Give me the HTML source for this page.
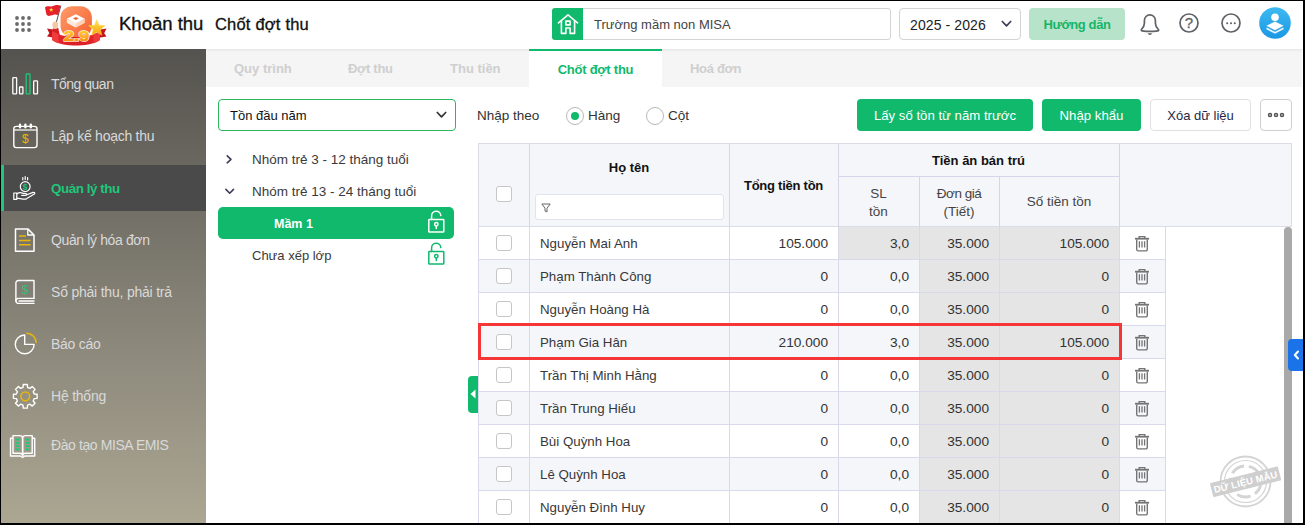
<!DOCTYPE html>
<html lang="vi">
<head>
<meta charset="utf-8">
<title>Chốt đợt thu</title>
<style>
*{box-sizing:border-box;margin:0;padding:0}
html,body{width:1305px;height:525px;overflow:hidden;background:#fff}
body{font-family:"Liberation Sans",sans-serif;font-size:13px;color:#1f1f1f;position:relative}
.abs{position:absolute}
#frame{position:absolute;left:0;top:0;width:1305px;height:525px;border:1px solid #000;border-right-width:2px;border-bottom-width:2px;z-index:100;pointer-events:none}
/* header */
#hdr{position:absolute;left:0;top:0;width:1305px;height:49px;background:#fff}
.t1{position:absolute;left:119px;top:12px;font-size:18.5px;line-height:24px;color:#111;white-space:nowrap;-webkit-text-stroke:.35px #111}
.t2{position:absolute;left:215px;top:12px;font-size:16.5px;letter-spacing:.2px;line-height:24px;color:#111;white-space:nowrap;-webkit-text-stroke:.3px #111}
.school{position:absolute;left:552px;top:8px;width:339px;height:32px;border:1px solid #d4d4d4;border-radius:3px;background:#fff}
.school .ic{position:absolute;left:-1px;top:-1px;width:31px;height:32px;background:#10b96c;border-radius:3px 0 0 3px}
.school span{position:absolute;left:41px;top:1px;line-height:30px;font-size:13px;color:#444;white-space:nowrap}
.year{position:absolute;left:899px;top:8px;width:122px;height:32px;border:1px solid #d4d4d4;border-radius:4px;background:#fff}
.year span{position:absolute;left:10px;top:1px;line-height:30px;font-size:14px;letter-spacing:.1px;color:#222;white-space:nowrap}
.guide{position:absolute;left:1029px;top:8px;width:96px;height:32px;border-radius:4px;background:#b6e3ca;color:#16b568;font-weight:bold;font-size:13px;letter-spacing:-.4px;line-height:33px;text-align:center}
/* sidebar */
#side{position:absolute;left:0;top:49px;width:206px;height:476px;background:linear-gradient(180deg,#55534f 0%,#6d6a62 28%,#8a867a 60%,#aca792 100%)}
.mi{position:absolute;left:0;width:206px;height:46px}
.mi span{position:absolute;left:51px;top:0;line-height:47px;font-size:14px;color:#d9d9d9;white-space:nowrap}
.mi.act{background:#4a4a4a}
.mi.act:before{content:"";position:absolute;left:1px;top:0;width:3px;height:46px;background:#1fc77a}
.mi.act span{color:#1fc77a;font-weight:bold;font-size:13.400px}
.mi svg{position:absolute}
/* tabs */
#tabs{position:absolute;left:206px;top:49px;width:1096px;height:38px;background:#f5f5f5;box-shadow:inset 0 3px 3px -2px rgba(0,0,0,.08)}
.tab{position:absolute;top:0;height:38px;line-height:40px;font-size:13px;font-weight:bold;color:#cfcfcf;white-space:nowrap}
.tab.on{background:#fff;border-top:2px solid #10b96c;color:#10b96c;line-height:38px;text-align:center;letter-spacing:-.25px}
/* left tree */
.dd{position:absolute;left:218px;top:99px;width:238px;height:32px;border:1px solid #2fb55f;border-radius:4px;background:#fff}
.dd span{position:absolute;left:11px;top:1px;line-height:30px;font-size:13px;color:#111}
.tr{position:absolute;left:252px;font-size:13.5px;color:#3a3a3a;line-height:20px;white-space:nowrap}
.sel{position:absolute;left:218px;top:207px;width:236px;height:32px;border-radius:5px;background:#10b96c}
.sel span{position:absolute;left:56px;top:1px;line-height:32px;font-size:12.5px;color:#fff;font-weight:bold}
/* toolbar */
.lbl{position:absolute;font-size:13.5px;line-height:20px;color:#333;white-space:nowrap}
.radio{position:absolute;width:18px;height:18px;border:1px solid #b9b9b9;border-radius:50%;background:#fff}
.radio.on:after{content:"";position:absolute;left:4px;top:4px;width:8px;height:8px;border-radius:50%;background:#10b96c}
.btn{position:absolute;top:99px;height:32px;border-radius:4px;font-size:13.2px;line-height:32px;text-align:center;white-space:nowrap}
.btn.g{background:#10b96c;color:#fff;line-height:34px}
.btn.w{background:#fff;border:1px solid #e0e0e0;color:#23284a;line-height:32px;font-size:13px}
/* table */
#thead{position:absolute;left:478px;top:143px;width:814px;height:84px;background:#f5f6fa;border:1px solid #dcdce8}
.vl{position:absolute;width:1px;background:#d5d5ea}
.hl{position:absolute;height:1px;background:#d5d5ea}
.th{position:absolute;font-weight:bold;font-size:13px;color:#111;text-align:center;white-space:nowrap;line-height:18px}
.th2{position:absolute;font-size:13.5px;color:#444;text-align:center;white-space:nowrap;line-height:18px}
.cb{position:absolute;width:16px;height:16px;border:1px solid #c6c6c6;border-radius:3px;background:#fff}
.filter{position:absolute;left:535px;top:194px;width:189px;height:26px;border:1px solid #e3e3ee;border-radius:3px;background:#fff}
.row{position:absolute;left:478px;width:688px;height:33px;background:#fff}
.row.alt{background:#f5f6fa}
.row .c{position:absolute;top:0;height:33px;line-height:34px;font-size:13.5px;color:#333;white-space:nowrap;border-right:1px solid #d9d9ee;border-bottom:1px solid #d9d9ee}
.row .c.r{text-align:right;padding-right:10px;font-size:13.700px}
.row .c.gy{background:#e5e5e5}
.row .cb{left:17px;top:8px}
.c0{left:0;width:52px;border-left:1px solid #d9d9ee}
.c1{left:52px;width:200px;padding-left:10px;font-size:13.300px !important;color:#383838 !important}
.c2{left:252px;width:109px}
.c3{left:361px;width:81px}
.c4{left:442px;width:80px}
.c5{left:522px;width:120px}
.c6{left:642px;width:46px}
.c6 svg{position:absolute;left:14px;top:8px}
.hi{position:absolute;left:478px;top:323px;width:644px;height:37px;border:3px solid #f63636}
.sb{position:absolute;left:1284px;top:227px;width:8px;height:298px;background:#a9a9a9;border-radius:4px 4px 0 0}
.bh{position:absolute;left:1288px;top:339px;width:17px;height:32px;background:#1a73e8;border-radius:4px 0 0 4px}
.gh{position:absolute;left:468px;top:376px;width:10px;height:37px;background:#10b96c;border-radius:4px 0 0 4px}
</style>
</head>
<body>
<div id="hdr">
  <svg class="abs" style="left:14px;top:15px" width="18" height="18" viewBox="0 0 18 18" fill="#6b6b6b"><circle cx="3" cy="3" r="1.9"/><circle cx="9" cy="3" r="1.9"/><circle cx="15" cy="3" r="1.9"/><circle cx="3" cy="9" r="1.9"/><circle cx="9" cy="9" r="1.9"/><circle cx="15" cy="9" r="1.9"/><circle cx="3" cy="15" r="1.9"/><circle cx="9" cy="15" r="1.9"/><circle cx="15" cy="15" r="1.9"/></svg>
  <svg class="abs" style="left:44px;top:4px" width="64" height="42" viewBox="0 0 64 42">
<defs>
<linearGradient id="lg1" x1="0" y1="0" x2="1" y2="1"><stop offset="0" stop-color="#ff9c6b"/><stop offset="1" stop-color="#f4602f"/></linearGradient>
<linearGradient id="lg2" x1="0" y1="0" x2="0" y2="1"><stop offset="0" stop-color="#ffdc3c"/><stop offset="1" stop-color="#ff7a00"/></linearGradient>
<linearGradient id="lg3" x1="0" y1="0" x2="0" y2="1"><stop offset="0" stop-color="#ffe45a"/><stop offset="1" stop-color="#f5a300"/></linearGradient>
<linearGradient id="lg4" x1="0" y1="0" x2="1" y2="0"><stop offset="0" stop-color="#e8262c"/><stop offset=".5" stop-color="#d81e25"/><stop offset="1" stop-color="#e8262c"/></linearGradient>
</defs>
<path d="M3 24.500l9 1.500v8l-9-1.500 2.300-3.200z" fill="#c4161c"/>
<path d="M62.500 24.500l-9 1.500v8l9-1.500-2.300-3.200z" fill="#c4161c"/>
<rect x="16.500" y="2.200" width="31.400" height="31.400" rx="11.500" fill="url(#lg1)"/>
<path d="M31.800 14.500l9 4.300-9 4.700-9-4.700z" fill="#ffd9c4"/>
<path d="M31.800 10.300l9 4.500-9 4.700-9-4.700z" fill="#fff"/>
<path d="M22.800 14.800v4l9 4.700v-4z" fill="#ffe9dd"/><path d="M40.800 14.800v4l-9 4.700v-4z" fill="#ffd2ba"/>
<path d="M29 14.500l2.800-1.400 2.800 1.400-2.800 1.500z" fill="#f4602f"/>
<path d="M16.800 1.800 10.800 24" stroke="#5b4a44" stroke-width="1" fill="none"/>
<path d="M1 3.400c2.400-2.200 4.600-.400 7.200-1.200s4.600-2 8.400-.600l-2.500 9.400c-3-1.300-5-.200-7.200.500s-3.400.400-4.400-.700z" fill="#e3222b"/>
<polygon points="7.20,3.40 7.79,4.99 9.48,5.06 8.15,6.11 8.61,7.74 7.20,6.80 5.79,7.74 6.25,6.11 4.92,5.06 6.61,4.99" fill="#ffd83a"/>
<path d="M8.800 24.500l5.500-.500 1.800 9-7 .500z" fill="#d91f26"/>
<ellipse cx="11.300" cy="21.200" rx="2.900" ry="3.700" fill="#f7c7a3"/>
<path d="M8 27c7 4.500 16 6 24 6s17-1.500 24-6v9c-7 4.500-16 5.500-24 5.500S15 40.500 8 36z" fill="url(#lg4)"/>
<path d="M8 27c2 1.300 4.200 2.300 6.500 3.100v9.300C12.200 38.600 10 37.500 8 36z" fill="#ef3b3b"/>
<path d="M56 27c-2 1.300-4.200 2.300-6.500 3.100v9.300c2.300-.800 4.500-1.900 6.500-3.400z" fill="#ef3b3b"/>
<polygon points="52.80,15.70 55.03,21.23 60.98,21.64 56.41,25.47 57.85,31.26 52.80,28.10 47.75,31.26 49.19,25.47 44.62,21.64 50.57,21.23" fill="url(#lg3)" stroke="#ffd24a" stroke-width=".5"/>
<text x="19.800" y="37.300" textLength="25.400" lengthAdjust="spacingAndGlyphs" font-family="Liberation Sans, sans-serif" font-weight="bold" font-size="14" fill="url(#lg2)" stroke="#fff" stroke-width="1.600" paint-order="stroke" stroke-linejoin="round">2.9</text><text x="19.800" y="37.300" textLength="25.400" lengthAdjust="spacingAndGlyphs" font-family="Liberation Sans, sans-serif" font-weight="bold" font-size="14" fill="url(#lg2)" stroke="url(#lg2)" stroke-width=".600">2.9</text>
</svg>
  <div class="t1">Khoản thu</div>
  <div class="t2">Chốt đợt thu</div>
  <div class="school"><div class="ic"><svg class="abs" style="left:0;top:0" width="32" height="31" viewBox="0 -.300 32 31" fill="none" stroke="#fff" stroke-width="1.6" stroke-linejoin="round" stroke-linecap="round"><path d="M6.5 14.6 16 6.6l9.5 8"/><path d="M9.400 12.600v12.500h4.500v-5.400h4.200v5.400h4.500V12.600"/><rect x="13.9" y="12.8" width="4.2" height="3.8" /></svg></div><span>Trường mầm non MISA</span></div>
  <div class="year"><span>2025 - 2026</span><svg class="abs" style="left:101px;top:11px" width="11" height="8" viewBox="0 0 11 8" fill="none" stroke="#3b3d5c" stroke-width="1.7" stroke-linecap="round" stroke-linejoin="round"><path d="M1.3 1.5 5.5 5.8 9.7 1.5"/></svg></div>
  <div class="guide">Hướng dẫn</div>
  <svg class="abs" style="left:1138px;top:12px" width="24" height="24" viewBox="0 0 24 24" fill="none" stroke="#5f6266" stroke-width="1.700" stroke-linejoin="round" stroke-linecap="round"><path d="M3.400 17.500C4.800 16 6.400 14.200 6.400 11.200V8.400a5.500 5.500 0 0 1 11 0v2.800c0 3 1.600 4.800 3 6.300.500.600.200 1.300-.600 1.400-4.800.700-10.800.700-15.600 0-.800-.100-1.100-.800-.800-1.400z"/><path d="M9.700 21.300h4.400c-.400 1.100-1.200 1.600-2.200 1.600s-1.800-.500-2.200-1.600z" fill="#5f6266" stroke="none"/></svg>
<svg class="abs" style="left:1178px;top:12px" width="22" height="22" viewBox="0 0 22 22" fill="none" stroke="#5f6266" stroke-width="1.700"><circle cx="11" cy="11" r="9"/><text x="11" y="16.400" text-anchor="middle" font-family="Liberation Sans, sans-serif" font-size="15" fill="#5f6266" stroke="#5f6266" stroke-width=".300">?</text></svg>
<svg class="abs" style="left:1220px;top:12px" width="22" height="22" viewBox="0 0 22 22" fill="none" stroke="#5f6266" stroke-width="1.700"><circle cx="11" cy="11" r="9"/><g fill="#5f6266" stroke="none"><circle cx="7.200" cy="11.300" r="1.050"/><circle cx="11" cy="11.300" r="1.050"/><circle cx="14.800" cy="11.300" r="1.050"/></g></svg>
<svg class="abs" style="left:1259px;top:7px" width="32" height="32" viewBox="0 0 32 32"><defs><linearGradient id="av" x1="0" y1="0" x2="0" y2="1"><stop offset="0" stop-color="#3db9f1"/><stop offset="1" stop-color="#1b98e3"/></linearGradient></defs><circle cx="16" cy="16" r="15.800" fill="url(#av)"/><circle cx="16" cy="10.200" r="3.800" fill="#fff"/><path d="M16 14.500l8.500 4.300L16 23.300l-8.500-4.500z" fill="#fff"/><path d="M7.500 21.300 16 25.800l8.500-4.500" fill="none" stroke="#e6f4fc" stroke-width="1.800" stroke-linejoin="round"/></svg>
</div>
<div id="side">
  <div class="mi" style="top:12px"><svg style="left:11px;top:11px" width="29" height="24" viewBox="0 0 29 24" fill="none" stroke="#fff" stroke-width="1.3"><rect x="1.8" y="5.6" width="3.8" height="16.2" rx=".6"/><rect x="8.5" y="15" width="3.4" height="6.8" rx=".6"/><rect x="15.2" y="2" width="3.8" height="19.8" rx=".6" stroke="#1fc77a"/><rect x="22.7" y="8.8" width="3.8" height="13" rx=".6"/></svg><span style="letter-spacing:-.5px">Tổng quan</span></div>
  <div class="mi" style="top:64px"><svg style="left:12px;top:10px" width="27" height="27" viewBox="0 0 27 27" fill="none" stroke="#fff" stroke-width="1.4"><rect x="1.8" y="3.4" width="23.2" height="21.2" rx="2.6"/><path d="M2 7h23" stroke-width="1.2"/><path d="M8 1.6v2.6M13.4 1.6v2.6M18.8 1.6v2.6" stroke-width="2.4" stroke-linecap="round"/><text x="13.4" y="20.3" text-anchor="middle" font-family="Liberation Sans, sans-serif" font-size="12" fill="#e9b60a" stroke="none">$</text></svg><span style="letter-spacing:-.26px">Lập kế hoạch thu</span></div>
  <div class="mi act" style="top:116px"><svg style="left:12px;top:10px" width="26" height="26" viewBox="0 0 26 26" fill="none" stroke="#fff" stroke-width="1.2" stroke-linecap="round" stroke-linejoin="round"><path d="M10.8 2.6v2.2M13.2 1.6v3M15.6 2.6v2.2"/><circle cx="13.2" cy="11.6" r="4.9"/><text x="13.2" y="14.6" text-anchor="middle" font-family="Liberation Sans, sans-serif" font-weight="bold" font-size="8.5" fill="#1fc77a" stroke="none">$</text><rect x="1.8" y="18" width="3" height="6.4"/><path d="M4.8 18.8c2-1.3 4.2-1.5 6-.5l2.6.1c1.4 0 1.6 1.8.2 2h-3.800M13.600 20.300l7.400-2.900c1.400-.5 2.400.8 1.300 1.700l-7.500 4.500c-1.200.6-2.300.7-3.600.5l-6.400-1"/></svg><span style="letter-spacing:-.45px">Quản lý thu</span></div>
  <div class="mi" style="top:168px"><svg style="left:13px;top:10px" width="24" height="27" viewBox="0 0 24 27" fill="none" stroke="#fff" stroke-width="1.5" stroke-linejoin="round"><path d="M2.5 1.9h12.3l6.200 6.100v16.300h-18.500z"/><path d="M14.800 1.900v6.100h6.200" stroke-width="1.300"/><path d="M6 9h7M6 13.400h11.500M6 17.800h11.500" stroke="#e9b60a" stroke-width="1.500"/></svg><span style="letter-spacing:-.37px">Quản lý hóa đơn</span></div>
  <div class="mi" style="top:220px"><svg style="left:14px;top:10px" width="22" height="26" viewBox="0 0 22 26" fill="none" stroke="#fff" stroke-width="1.4" stroke-linejoin="round" stroke-linecap="round"><path d="M20 19.400V1.500H4.300a2.400 2.400 0 0 0-2.400 2.400v18.400"/><path d="M20 19.400H4.500a2.500 2.500 0 0 0 0 5H20M5 22h15" /><text x="11" y="14.800" text-anchor="middle" font-family="Liberation Sans, sans-serif" font-size="12" fill="#1fc77a" stroke="none">$</text></svg><span style="letter-spacing:-.21px">Sổ phải thu, phải trả</span></div>
  <div class="mi" style="top:272px"><svg style="left:13px;top:11px" width="25" height="24" viewBox="0 0 25 24" fill="none" stroke="#fff" stroke-width="1.4" stroke-linejoin="round"><path d="M11.700 12.400V3a9.400 9.400 0 1 0 9.400 9.400z"/><path d="M13.800 1.200a9.400 9.400 0 0 1 9.300 9.200" stroke="#e9b60a" stroke-width="1.500" stroke-linecap="round"/></svg><span style="letter-spacing:-.27px">Báo cáo</span></div>
  <div class="mi" style="top:324px"><svg style="left:12px;top:10px" width="27" height="27" viewBox="0 0 27 27" fill="none" stroke="#fff" stroke-width="1.4" stroke-linejoin="round"><path d="M11.02 4.39 L11.27 1.47 L15.33 1.47 L15.58 4.39 L17.99 5.39 L20.23 3.50 L23.10 6.37 L21.21 8.61 L22.21 11.02 L25.13 11.27 L25.13 15.33 L22.21 15.58 L21.21 17.99 L23.10 20.23 L20.23 23.10 L17.99 21.21 L15.58 22.21 L15.33 25.13 L11.27 25.13 L11.02 22.21 L8.61 21.21 L6.37 23.10 L3.50 20.23 L5.39 17.99 L4.39 15.58 L1.47 15.33 L1.47 11.27 L4.39 11.02 L5.39 8.61 L3.50 6.37 L6.37 3.50 L8.61 5.39Z"/><circle cx="13.3" cy="13.3" r="4.4" stroke="#e9b60a" stroke-width="1.5"/></svg><span style="letter-spacing:-.22px">Hệ thống</span></div>
  <div class="mi" style="top:373px"><svg style="left:9px;top:12px" width="28" height="25" viewBox="0 0 28 25" fill="none" stroke="#fff" stroke-width="1.400" stroke-linejoin="round"><path d="M4 4.200H1.500v17.800h9.500c1 0 1.700.500 2.600 1.400.900-.900 1.600-1.400 2.600-1.400h9.500V4.200h-2.500"/><path d="M4 1.600h6.800c1.500 0 2.800 1 2.800 2.400V21.500c0-1.300-1.300-2.300-2.800-2.300H4z"/><path d="M23.200 1.600h-6.800c-1.500 0-2.800 1-2.800 2.400V21.500c0-1.300 1.300-2.300 2.800-2.300h6.800z"/><path d="M6.500 5.500h4M6.500 8.800h4M6.500 12.100h4M6.500 15.400h4M16.700 5.500h4M16.700 8.800h4M16.700 12.100h4M16.700 15.400h4" stroke="#1fc77a" stroke-width="1.800"/></svg><span style="letter-spacing:-.41px">Đào tạo MISA EMIS</span></div>
</div>
<div id="tabs">
  <div class="tab" style="left:28px">Quy trình</div>
  <div class="tab" style="left:142px;letter-spacing:-.3px">Đợt thu</div>
  <div class="tab" style="left:244px">Thu tiền</div>
  <div class="tab on" style="left:323px;width:133px">Chốt đợt thu</div>
  <div class="tab" style="left:484px;letter-spacing:-.3px">Hoá đơn</div>
</div>
<div class="dd"><span>Tồn đầu năm</span><svg class="abs" style="left:217px;top:11px" width="11" height="8" viewBox="0 0 11 8" fill="none" stroke="#333" stroke-width="1.7" stroke-linecap="round" stroke-linejoin="round"><path d="M1.3 1.5 5.5 5.8 9.7 1.5"/></svg></div>
<svg class="abs" style="left:225px;top:154px" width="8" height="11" viewBox="0 0 8 11" fill="none" stroke="#3b3d5c" stroke-width="1.600" stroke-linecap="round" stroke-linejoin="round"><path d="M2.200 1.800 6 5.300 2.200 8.800"/></svg>
<div class="tr" style="top:150px">Nhóm trẻ 3 - 12 tháng tuổi</div>
<svg class="abs" style="left:223.500px;top:187px" width="11" height="8" viewBox="0 0 11 8" fill="none" stroke="#3b3d5c" stroke-width="1.600" stroke-linecap="round" stroke-linejoin="round"><path d="M1.900 2.400 5.700 6.200 9.500 2.400"/></svg>
<div class="tr" style="top:182px">Nhóm trẻ 13 - 24 tháng tuổi</div>
<div class="sel"><span>Mầm 1</span></div>
<svg class="abs" style="left:427px;top:210px" width="19" height="24" viewBox="0 0 19 24" fill="none" stroke="#fff" stroke-width="1.5" stroke-linecap="round" stroke-linejoin="round"><rect x="1.8" y="9.5" width="15" height="12.5" rx=".6"/><path d="M4.6 9.5V6.2a4.6 4.6 0 0 1 9.2-.6"/><circle cx="9.3" cy="14.3" r="1.7"/><path d="M9.3 16v2.6"/></svg>
<div class="tr" style="top:246px;font-size:13px">Chưa xếp lớp</div>
<svg class="abs" style="left:427px;top:242px" width="19" height="24" viewBox="0 0 19 24" fill="none" stroke="#10b96c" stroke-width="1.5" stroke-linecap="round" stroke-linejoin="round"><rect x="1.8" y="9.5" width="15" height="12.5" rx=".6"/><path d="M4.6 9.5V6.2a4.6 4.6 0 0 1 9.2-.6"/><circle cx="9.3" cy="14.3" r="1.7"/><path d="M9.3 16v2.6"/></svg>

<div class="lbl" style="left:477px;top:106px">Nhập theo</div>
<div class="radio on" style="left:566px;top:107px"></div>
<div class="lbl" style="left:588px;top:106px">Hàng</div>
<div class="radio" style="left:646px;top:107px"></div>
<div class="lbl" style="left:668px;top:106px">Cột</div>
<div class="btn g" style="left:857px;width:176px">Lấy số tồn từ năm trước</div>
<div class="btn g" style="left:1042px;width:99px">Nhập khẩu</div>
<div class="btn w" style="left:1150px;width:101px">Xóa dữ liệu</div>
<div class="btn w" style="left:1260px;width:32px;border-color:#cfcfcf"><svg class="abs" style="left:6px;top:12px" width="18" height="6" viewBox="0 0 18 6" fill="none" stroke="#555" stroke-width="1.500"><circle cx="3" cy="3" r="1.500"/><circle cx="9" cy="3" r="1.5"/><circle cx="15" cy="3" r="1.5"/></svg></div>

<div id="thead"></div>
<div class="vl" style="left:529px;top:144px;height:83px"></div>
<div class="vl" style="left:729px;top:144px;height:83px"></div>
<div class="vl" style="left:838px;top:144px;height:83px"></div>
<div class="vl" style="left:919px;top:176px;height:51px"></div>
<div class="vl" style="left:999px;top:176px;height:51px"></div>
<div class="vl" style="left:1119px;top:144px;height:83px"></div>
<div class="hl" style="left:838px;top:176px;width:281px"></div>
<div class="cb" style="left:496px;top:186px"></div>
<div class="th" style="left:529px;width:200px;top:159px">Họ tên</div>
<div class="filter"><svg class="abs" style="left:5px;top:8px" width="10" height="10" viewBox="0 0 10 10" fill="none" stroke="#666" stroke-width="1" stroke-linejoin="round"><path d="M.8 1h8.4L6 5.2V9L4 8V5.2z"/></svg></div>
<div class="th" style="left:729px;width:109px;top:177px;letter-spacing:-.25px">Tổng tiền tồn</div>
<div class="th" style="left:838px;width:281px;top:152px">Tiền ăn bán trú</div>
<div class="th2" style="left:838px;width:81px;top:185px">SL<br>tồn</div>
<div class="th2" style="left:919px;width:80px;top:185px"><span style="letter-spacing:-.5px">Đơn giá</span><br>(Tiết)</div>
<div class="th2" style="left:999px;width:120px;top:193px">Số tiền tồn</div>
<div class="row" style="top:227px"><div class="c c0"><div class="cb"></div></div><div class="c c1">Nguyễn Mai Anh</div><div class="c c2 r">105.000</div><div class="c c3 r gy">3,0</div><div class="c c4 r gy">35.000</div><div class="c c5 r gy">105.000</div><div class="c c6"><svg width="16" height="17" viewBox="0 0 16 17" fill="none" stroke="#747474" stroke-width="1.4"><path d="M1 3.7h14" stroke-width="1.8"/><path d="M5.2 3V1.6h5.6V3" /><path d="M2.7 4.5v9.8a1.6 1.6 0 0 0 1.6 1.6h7.4a1.6 1.6 0 0 0 1.6-1.6V4.5"/><path d="M5.400 6.200v6.200M8 6.200v6.200M10.600 6.200v6.200" stroke-width="1.3"/></svg></div></div>
<div class="row alt" style="top:260px"><div class="c c0"><div class="cb"></div></div><div class="c c1">Phạm Thành Công</div><div class="c c2 r">0</div><div class="c c3 r">0,0</div><div class="c c4 r gy">35.000</div><div class="c c5 r gy">0</div><div class="c c6"><svg width="16" height="17" viewBox="0 0 16 17" fill="none" stroke="#747474" stroke-width="1.4"><path d="M1 3.7h14" stroke-width="1.8"/><path d="M5.2 3V1.6h5.6V3" /><path d="M2.7 4.5v9.8a1.6 1.6 0 0 0 1.6 1.6h7.4a1.6 1.6 0 0 0 1.6-1.6V4.5"/><path d="M5.400 6.200v6.200M8 6.200v6.200M10.600 6.200v6.200" stroke-width="1.3"/></svg></div></div>
<div class="row" style="top:293px"><div class="c c0"><div class="cb"></div></div><div class="c c1">Nguyễn Hoàng Hà</div><div class="c c2 r">0</div><div class="c c3 r">0,0</div><div class="c c4 r gy">35.000</div><div class="c c5 r gy">0</div><div class="c c6"><svg width="16" height="17" viewBox="0 0 16 17" fill="none" stroke="#747474" stroke-width="1.4"><path d="M1 3.7h14" stroke-width="1.8"/><path d="M5.2 3V1.6h5.6V3" /><path d="M2.7 4.5v9.8a1.6 1.6 0 0 0 1.6 1.6h7.4a1.6 1.6 0 0 0 1.6-1.6V4.5"/><path d="M5.400 6.200v6.200M8 6.200v6.200M10.600 6.200v6.200" stroke-width="1.3"/></svg></div></div>
<div class="row alt" style="top:326px"><div class="c c0"><div class="cb"></div></div><div class="c c1">Phạm Gia Hân</div><div class="c c2 r">210.000</div><div class="c c3 r">3,0</div><div class="c c4 r gy">35.000</div><div class="c c5 r gy">105.000</div><div class="c c6"><svg width="16" height="17" viewBox="0 0 16 17" fill="none" stroke="#747474" stroke-width="1.4"><path d="M1 3.7h14" stroke-width="1.8"/><path d="M5.2 3V1.6h5.6V3" /><path d="M2.7 4.5v9.8a1.6 1.6 0 0 0 1.6 1.6h7.4a1.6 1.6 0 0 0 1.6-1.6V4.5"/><path d="M5.400 6.200v6.200M8 6.200v6.200M10.600 6.200v6.200" stroke-width="1.3"/></svg></div></div>
<div class="row" style="top:359px"><div class="c c0"><div class="cb"></div></div><div class="c c1">Trần Thị Minh Hằng</div><div class="c c2 r">0</div><div class="c c3 r">0,0</div><div class="c c4 r gy">35.000</div><div class="c c5 r gy">0</div><div class="c c6"><svg width="16" height="17" viewBox="0 0 16 17" fill="none" stroke="#747474" stroke-width="1.4"><path d="M1 3.7h14" stroke-width="1.8"/><path d="M5.2 3V1.6h5.6V3" /><path d="M2.7 4.5v9.8a1.6 1.6 0 0 0 1.6 1.6h7.4a1.6 1.6 0 0 0 1.6-1.6V4.5"/><path d="M5.400 6.200v6.200M8 6.200v6.200M10.600 6.200v6.200" stroke-width="1.3"/></svg></div></div>
<div class="row alt" style="top:392px"><div class="c c0"><div class="cb"></div></div><div class="c c1">Trần Trung Hiếu</div><div class="c c2 r">0</div><div class="c c3 r">0,0</div><div class="c c4 r gy">35.000</div><div class="c c5 r gy">0</div><div class="c c6"><svg width="16" height="17" viewBox="0 0 16 17" fill="none" stroke="#747474" stroke-width="1.4"><path d="M1 3.7h14" stroke-width="1.8"/><path d="M5.2 3V1.6h5.6V3" /><path d="M2.7 4.5v9.8a1.6 1.6 0 0 0 1.6 1.6h7.4a1.6 1.6 0 0 0 1.6-1.6V4.5"/><path d="M5.400 6.200v6.200M8 6.200v6.200M10.600 6.200v6.200" stroke-width="1.3"/></svg></div></div>
<div class="row" style="top:425px"><div class="c c0"><div class="cb"></div></div><div class="c c1">Bùi Quỳnh Hoa</div><div class="c c2 r">0</div><div class="c c3 r">0,0</div><div class="c c4 r gy">35.000</div><div class="c c5 r gy">0</div><div class="c c6"><svg width="16" height="17" viewBox="0 0 16 17" fill="none" stroke="#747474" stroke-width="1.4"><path d="M1 3.7h14" stroke-width="1.8"/><path d="M5.2 3V1.6h5.6V3" /><path d="M2.7 4.5v9.8a1.6 1.6 0 0 0 1.6 1.6h7.4a1.6 1.6 0 0 0 1.6-1.6V4.5"/><path d="M5.400 6.200v6.200M8 6.200v6.200M10.600 6.200v6.200" stroke-width="1.3"/></svg></div></div>
<div class="row alt" style="top:458px"><div class="c c0"><div class="cb"></div></div><div class="c c1">Lê Quỳnh Hoa</div><div class="c c2 r">0</div><div class="c c3 r">0,0</div><div class="c c4 r gy">35.000</div><div class="c c5 r gy">0</div><div class="c c6"><svg width="16" height="17" viewBox="0 0 16 17" fill="none" stroke="#747474" stroke-width="1.4"><path d="M1 3.7h14" stroke-width="1.8"/><path d="M5.2 3V1.6h5.6V3" /><path d="M2.7 4.5v9.8a1.6 1.6 0 0 0 1.6 1.6h7.4a1.6 1.6 0 0 0 1.6-1.6V4.5"/><path d="M5.400 6.200v6.200M8 6.200v6.200M10.600 6.200v6.200" stroke-width="1.3"/></svg></div></div>
<div class="row" style="top:491px"><div class="c c0"><div class="cb"></div></div><div class="c c1">Nguyễn Đình Huy</div><div class="c c2 r">0</div><div class="c c3 r">0,0</div><div class="c c4 r gy">35.000</div><div class="c c5 r gy">0</div><div class="c c6"><svg width="16" height="17" viewBox="0 0 16 17" fill="none" stroke="#747474" stroke-width="1.4"><path d="M1 3.7h14" stroke-width="1.8"/><path d="M5.2 3V1.6h5.6V3" /><path d="M2.7 4.5v9.8a1.6 1.6 0 0 0 1.6 1.6h7.4a1.6 1.6 0 0 0 1.6-1.6V4.5"/><path d="M5.400 6.200v6.200M8 6.200v6.200M10.600 6.200v6.200" stroke-width="1.3"/></svg></div></div>
<div class="hi"></div>
<div class="sb"></div>
<div class="bh"><svg class="abs" style="left:5px;top:11px" width="7" height="10" viewBox="0 0 7 10" fill="none" stroke="#fff" stroke-width="2" stroke-linecap="round" stroke-linejoin="round"><path d="M5 1.5 1.8 5 5 8.5"/></svg></div>
<div class="gh"><svg class="abs" style="left:2px;top:13px" width="6" height="10" viewBox="0 0 6 10" fill="#fff"><path d="M5.5 0.5v9L.5 5z"/></svg></div>
<svg class="abs" style="left:1208px;top:450px" width="78" height="64" viewBox="0 0 78 64"><g fill="none" stroke="#d4d4d4"><circle cx="37.500" cy="31.500" r="25" stroke-width="1.800"/><circle cx="37.500" cy="31.500" r="21" stroke-width="1.200"/><circle cx="37.500" cy="31.500" r="15.500" stroke-width="3" stroke-dasharray="14 5"/></g><g transform="rotate(-14 37.500 31.500)"><rect x="2.500" y="24.500" width="70" height="14.500" rx="1" fill="#cfcfcf"/><text x="37.500" y="35.300" text-anchor="middle" font-family="Liberation Sans, sans-serif" font-weight="bold" font-size="9.500" fill="#fff" letter-spacing=".2">DỮ LIỆU MẪU</text></g></svg>
<div id="frame"></div>
</body>
</html>
